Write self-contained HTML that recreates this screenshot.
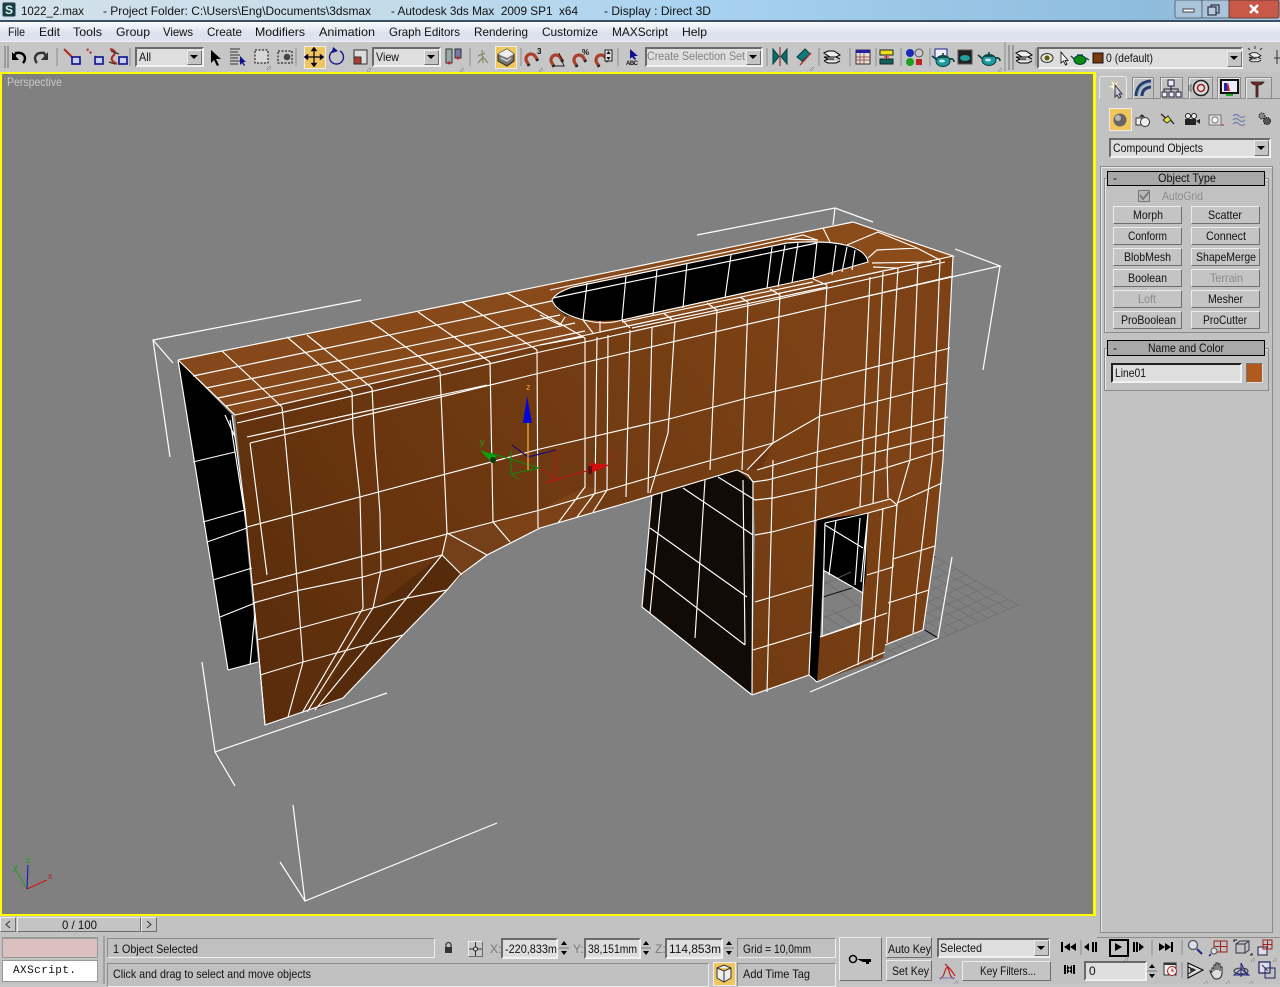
<!DOCTYPE html>
<html><head><meta charset="utf-8"><title>3ds Max</title>
<style>
html,body{margin:0;padding:0;width:1280px;height:984px;overflow:hidden;background:#c6c6c6}
div{position:absolute;box-sizing:border-box}
.b{background:#c4c4c4;border:1px solid;border-color:#ececec #6e6e6e #6e6e6e #ececec}
.s{background:#dedede;border:2px solid;border-color:#6a6a6a #f0f0f0 #f0f0f0 #6a6a6a}
.f{background:#c0c0c0;border:1px solid;border-color:#8a8a8a #eee #eee #8a8a8a}
.g{border:1px solid #8a8a8a;box-shadow:inset 1px 1px 0 #e8e8e8}
svg{position:absolute;left:0;top:0}
text{font-family:"Liberation Sans",sans-serif;font-size:12px;fill:#111}
</style></head><body>

<div style="left:0;top:0;width:1280px;height:21px;background:linear-gradient(90deg,#d4e2ea 0,#c4dcea 30%,#a8d2f0 55%,#9cc8e8 70%,#8ebcdc 90%,#a8c8dc 100%)"></div>
<div style="left:0;top:20px;width:1280px;height:2px;background:#3c5064"></div>
<div style="left:0;top:22px;width:1280px;height:19px;background:linear-gradient(#f8fafc 0,#eef1f8 25%,#dde1ee 60%,#dfe3ef 100%)"></div>
<div style="left:0;top:41px;width:1280px;height:31px;background:#c6c6c6;border-top:1px solid #f0f0f0"></div>
<div style="left:0;top:72px;width:1096px;height:844px;background:#808080;border:2px solid #ffff00;border-right:3px solid #ffff00"></div>
<div style="left:1096px;top:72px;width:184px;height:866px;background:#c2c2c2"></div>
<div style="left:0;top:916px;width:1096px;height:22px;background:#c2c2c2"></div>
<div style="left:0;top:934px;width:1280px;height:50px;background:#c2c2c2"></div>

<!-- toolbar widgets -->
<div style="left:304px;top:46px;width:22px;height:23px;background:#efc75e;border:1px solid #eee"></div>
<div style="left:495px;top:46px;width:22px;height:23px;background:#efc75e;border:1px solid #eee"></div>
<div class="s" style="left:135px;top:47px;width:69px;height:20px"></div>
<div class="b" style="left:187px;top:50px;width:15px;height:15px"></div>
<div class="s" style="left:372px;top:47px;width:69px;height:20px"></div>
<div class="b" style="left:424px;top:50px;width:15px;height:15px"></div>
<div class="s" style="left:645px;top:47px;width:118px;height:20px"></div>
<div class="b" style="left:746px;top:50px;width:15px;height:15px"></div>
<div class="s" style="left:1037px;top:47px;width:206px;height:22px"></div>
<div class="b" style="left:1227px;top:51px;width:15px;height:16px"></div>

<!-- right panel -->
<div style="left:1099px;top:98px;width:181px;height:1px;background:#8e8e8e"></div>
<div style="left:1099px;top:76px;width:28px;height:23px;background:#c2c2c2;border:1px solid #e8e8e8;border-bottom:none;border-radius:3px 3px 0 0"></div>
<div class="g" style="left:1132px;top:77px;width:22px;height:22px;border-bottom:none"></div>
<div class="g" style="left:1160px;top:77px;width:23px;height:22px;border-bottom:none"></div>
<div class="g" style="left:1188px;top:77px;width:25px;height:22px;border-bottom:none"></div>
<div class="g" style="left:1217px;top:77px;width:24px;height:22px;border-bottom:none"></div>
<div class="g" style="left:1245px;top:77px;width:27px;height:22px;border-bottom:none"></div>
<div style="left:1109px;top:108px;width:23px;height:23px;background:#efc75e;border:1px solid #eee"></div>
<div class="s" style="left:1109px;top:138px;width:162px;height:20px"></div>
<div class="b" style="left:1254px;top:140px;width:15px;height:16px"></div>
<div class="g" style="left:1100px;top:166px;width:173px;height:767px;border-bottom:1px solid #8a8a8a"></div>
<div class="g" style="left:1104px;top:178px;width:165px;height:155px"></div>
<div class="g" style="left:1104px;top:348px;width:165px;height:43px"></div>
<div style="left:1107px;top:171px;width:158px;height:15px;background:#a8a8a8;border:1px solid #000"></div>
<div style="left:1107px;top:340px;width:158px;height:16px;background:#a8a8a8;border:1px solid #000"></div>
<div style="left:1138px;top:190px;width:12px;height:12px;background:#b8b8b8;border:1px solid #777"></div>
<div class="b" style="left:1113px;top:206px;width:69px;height:18px"></div><div class="b" style="left:1191px;top:206px;width:69px;height:18px"></div>
<div class="b" style="left:1113px;top:227px;width:69px;height:18px"></div><div class="b" style="left:1191px;top:227px;width:69px;height:18px"></div>
<div class="b" style="left:1113px;top:248px;width:69px;height:18px"></div><div class="b" style="left:1191px;top:248px;width:69px;height:18px"></div>
<div class="b" style="left:1113px;top:269px;width:69px;height:18px"></div><div class="b" style="left:1191px;top:269px;width:69px;height:18px"></div>
<div class="b" style="left:1113px;top:290px;width:69px;height:18px"></div><div class="b" style="left:1191px;top:290px;width:69px;height:18px"></div>
<div class="b" style="left:1113px;top:311px;width:69px;height:18px"></div><div class="b" style="left:1191px;top:311px;width:69px;height:18px"></div>
<div class="s" style="left:1111px;top:363px;width:131px;height:20px;border-color:#222 #f0f0f0 #f0f0f0 #222"></div>
<div style="left:1246px;top:363px;width:17px;height:20px;background:#b15a1e;border:1px solid #ddd;border-left-color:#777;border-top-color:#777"></div>
<div style="left:1097px;top:937px;width:183px;height:1px;background:#8e8e8e"></div>

<!-- bottom widgets -->
<div class="b" style="left:0;top:917px;width:16px;height:15px"></div>
<div class="b" style="left:17px;top:917px;width:124px;height:15px"></div>
<div class="b" style="left:141px;top:917px;width:16px;height:15px"></div>
<div style="left:2px;top:937px;width:96px;height:21px;background:#dcc0c0;border:1px solid #999;border-top:2px solid #999"></div>
<div style="left:2px;top:960px;width:96px;height:22px;background:#fff;border:1px solid #999"></div>
<div style="left:103px;top:936px;width:2px;height:48px;background:#a0a0a0"></div>
<div class="f" style="left:107px;top:938px;width:328px;height:20px"></div>
<div class="f" style="left:107px;top:963px;width:602px;height:24px"></div>
<div class="b" style="left:468px;top:941px;width:15px;height:16px;background:#c8c8c8"></div>
<div class="s" style="left:501px;top:938px;width:57px;height:21px"></div>
<div class="s" style="left:584px;top:938px;width:57px;height:21px"></div>
<div class="s" style="left:665px;top:938px;width:58px;height:21px"></div>
<div class="f" style="left:737px;top:938px;width:99px;height:20px"></div>
<div class="f" style="left:737px;top:963px;width:99px;height:24px"></div>
<div style="left:713px;top:962px;width:23px;height:24px;background:#efc75e;border:1px solid #eee"></div>
<div class="b" style="left:839px;top:937px;width:43px;height:44px"></div>
<div class="b" style="left:886px;top:937px;width:46px;height:21px"></div>
<div class="b" style="left:886px;top:960px;width:46px;height:21px"></div>
<div class="s" style="left:937px;top:938px;width:113px;height:20px"></div>
<div class="b" style="left:1034px;top:940px;width:15px;height:16px"></div>
<div class="b" style="left:962px;top:961px;width:89px;height:20px"></div>
<div class="s" style="left:1084px;top:961px;width:63px;height:20px"></div>
<div style="top:939px;width:20px;height:18px;border:2px solid #000;left:1109px"></div>

<svg width="1280" height="984" viewBox="0 0 1280 984" xmlns="http://www.w3.org/2000/svg">
<defs>
<linearGradient id="fr" gradientUnits="userSpaceOnUse" x1="270" y1="720" x2="800" y2="330">
<stop offset="0" stop-color="#592c0b"/><stop offset=".45" stop-color="#6c3710"/><stop offset="1" stop-color="#7c4215"/></linearGradient>
<linearGradient id="tp" gradientUnits="userSpaceOnUse" x1="180" y1="360" x2="950" y2="260">
<stop offset="0" stop-color="#85481a"/><stop offset="1" stop-color="#8b4c1a"/></linearGradient>
<g id="mag"><g transform="rotate(-30)"><path d="M-5 4 V0 A5 5 0 0 1 5 0 V4" fill="none" stroke="#a8402c" stroke-width="3.200"/><path d="M-6.500 4h3M3.500 4h3" stroke="#222" stroke-width="2"/></g></g>
<g id="pot"><ellipse cx="0" cy="1" rx="7" ry="5.5" fill="#1f9a9e" stroke="#083c3c"/><path d="M-6 0 L-11 -4 M6 -1 q5 -1 5 3" stroke="#083c3c" stroke-width="1.6" fill="none"/><path d="M-5 -3 h10 M-1 -6 h2" stroke="#083c3c" stroke-width="1.5"/><ellipse cx="-1" cy="1" rx="3" ry="1.5" fill="#bdeaea"/></g>
<g id="lay"><path d="M-8 -5 l4 -2 h6 l6 4 -4 2 h-6 z M-8 -1 l12 0 4 2 M-8 -1 l4 2 h6 M-8 3 l4 2 h8 l4 -2 M-8 3 l4 -2" fill="#eee" stroke="#000"/></g>
<g id="tri"><path d="M0 0 l-3 3 h3 z" fill="#fff" stroke="#555" stroke-width=".5"/></g>
<g id="dn"><path d="M-4 -2 h8 l-4 4 z" fill="#000"/></g>
<g id="spn"><path d="M0 -7 l3 4 h-6 z M0 7 l3 -4 h-6 z" fill="#000"/><path d="M-5 0 h10" stroke="#777"/></g>
</defs>

<!-- grid -->
<path d="M1018 605L852 509M1008 609L842 513M998 614L832 518M988 618L822 522M979 622L813 526M969 626L803 530M959 631L793 535M949 635L783 539M939 639L773 543M929 644L763 548M919 648L753 552M910 652L744 556M900 656L734 560M890 661L724 565M880 665L714 569M1018 605L880 665M1008 599L870 659M997 593L859 653M987 587L849 647M976 581L838 641M966 575L828 635M956 569L818 629M945 563L807 623M935 557L797 617" stroke="#707070" stroke-width=".8" fill="none"/>
<path d="M925 630l13 8M935 557l-4 -1" stroke="#000" fill="none"/>

<!-- model faces -->
<polygon points="178,360 228,670 258,662 240,470 232,415" fill="#000"/>
<polygon points="737,470 753,482 752,695 642,607 652,495" fill="#120a05"/>
<polygon points="235,415 540,345 953,256 943,460 935,546 923,630 885,645 883,658 817,682 809,675 752,695 755,535 753,482 737,470 630,502 540,528 487,555 460,575 447,590 403,635 343,698 265,725 255,613 245,510" fill="url(#fr)"/>
<polygon points="178,360 507,293 853,222 953,256 540,345 235,415" fill="url(#tp)"/>
<polygon points="442,555 462,575 447,590 403,635 343,698 315,710 373,608" fill="#552b0b"/>
<polygon points="447,533 493,522 510,542 487,555 462,575 442,555" fill="#74401a"/>
<polygon points="493,522 538,510 585,487 607,490 593,512 540,528 510,542" fill="#7a4216"/>
<polygon points="745,470 773,443 762,468" fill="#693610"/>
<polygon points="817,520 860,507 890,499 897,505 868,513" fill="#8a4c1c"/>
<!-- door -->
<polygon points="817,520 868,513 866,575 863,593 862,623 820,637 817,682 809,675" fill="#000"/>
<polygon points="823,570 863,593 862,623 820,637" fill="#808080"/>
<path d="M851 572l-26 12M863 610l-38 -29M845 629l-22 -14M823 618l36 -14M832 634l-9 -5M855 626l-22 -16" stroke="#6c6c6c" stroke-width=".8" fill="none"/>
<path d="M823 597L855 587" stroke="#111" stroke-width="1"/>
<!-- hole -->
<polygon points="552,300 556,308 565,315 580,319 600,321 622,320 767,288 813,278 868,262 866,255 857,248 845,245 833,243 813,242 787,243 573,287 558,294" fill="#000"/>

<!-- wires -->
<g fill="none" stroke="#fff" stroke-width="1.15">
<path d="M178 360L507 293L853 222L953 256L540 345L235 415L178 360"/>
<path d="M193 376L552 301M206 388L560 315M218 398L575 323M226 406L585 331M222 351L282 407M287 337L352 392M307 335L372 388M370 321L440 372M418 312L490 362M462 302L537 350M507 293L585 338M550 290L787 239L818 240"/>
<path d="M237 423L540 352L945 262M250 443L540 373L953 276M247 437L487 385"/>
<path d="M247 527L540 449L673 418L747 398L823 380L950 348"/>
<path d="M253 585L493 522L540 510L648 478L773 443M948 383L820 416L773 443L747 470M948 417L817 452L757 470M945 435L817 467L767 480L753 482M755 500L773 498L817 488L863 475L943 450"/>
<path d="M755 535L772 532L817 520L860 507L890 499L897 505L868 513L825 523M897 503L942 483M867 575L893 567L893 559L935 546M820 637L887 613M888 603L929 590M755 602L772 597L813 585M753 650L812 632"/>
<path d="M253 603L300 590L363 577L380 572L442 555M257 640L300 628L373 608L407 598L447 590M260 675L303 662L403 635M193 462L235 452M203 522L245 510M207 542L247 528M213 580L252 568M220 617L255 603M255 613L250 665M228 670L258 662"/>
<path d="M178 360L228 670M232 415L245 510L255 613L265 725M230 420L247 528M225 415L235 437M250 443L267 575"/>
<path d="M282 407L285 437L292 513L303 662L288 717M352 392L353 433L360 497L363 608M372 388L375 447L380 513L381 570L373 608M440 372L444 463L447 533L442 555M490 362L493 522L510 542M537 350L538 528"/>
<path d="M585 338L585 487L558 523M597 337L595 493L577 517M608 335L607 490L593 512M630 330L626 497M652 327L648 493M675 322L668 433L650 493M717 310L710 470M748 302L742 470M780 295L773 443M827 285L817 460M870 277L862 460L860 507M883 272L875 460L873 503M898 268L887 460L888 498M918 263L910 460L897 505M940 260L932 460L928 493L917 587L913 633M953 256L943 460L935 547L923 630"/>
<path d="M447 533L487 555M442 555L462 575M363 608L302 713M373 608L307 712M442 555L315 710"/>
<path d="M447 590L403 635L343 698L265 725L255 613M487 555L460 575L447 590M540 528L487 555M630 502L540 528M737 470L630 502"/>
<path d="M552 300Q556 312 580 319T622 320L767 288L813 278L868 262Q866 250 845 245Q825 240 787 243L573 287Q556 292 552 300M553 298L817 243"/>
<path d="M587 283L583 320M626 276L622 320M657 269L653 315M687 263L683 308M731 255L725 298M772 247L767 288M785 245L778 287M798 243L792 283M817 242L813 279M836 245L832 275M847 247L842 272M855 250L852 270"/>
<path d="M868 258L877 250L917 248L940 260M872 263L932 262M873 267L897 268M847 245L878 232L917 248M830 242L823 228M817 240L803 235L787 239M540 315L560 325M565 317L560 325M540 345L583 337M583 320L593 333M600 321L600 332M622 320L630 328M663 313L673 320M707 303L717 310M740 297L748 302M770 289L780 295M813 279L827 285M622 322L813 282M632 328L827 287M600 332L887 270"/>
<path d="M652 495L642 607L752 695M662 493L650 613M705 480L695 638M753 482L752 695M743 480L745 645M683 488L753 535M650 528L747 597M645 568L745 645M718 477L755 500M737 470L748 475L753 482"/>
<path d="M773 460L767 692M817 460L813 585L809 675M809 675L817 682L885 652M752 695L809 675"/>
<path d="M825 525L863 548M825 523L822 637M836 520L829 575M868 513L861 582M860 518L855 585M823 570L863 593M820 637L862 623M868 513L858 665M883 508L872 660M897 505L887 643M885 645L923 630"/>
</g>

<!-- bounding brackets -->
<g fill="none" stroke="#fff" stroke-width="1.2">
<path d="M361 300L153 340L170 457M153 340L173 363"/>
<path d="M697 235L835 208L873 222M835 208L833 225"/>
<path d="M855 299L1000 266L955 249M1000 266L983 370"/>
<path d="M202 662L215 752L387 693M215 752L235 786"/>
<path d="M497 823L305 901L293 805M305 901L280 862"/>
<path d="M810 692L938 638L952 557"/>
</g>

<!-- gizmo -->
<g>
<path d="M511 451V474M511 474L518 479M511 474L539 468L490 453" stroke="#0c8c0c" fill="none"/>
<path d="M512 445L528 457L556 450" stroke="#20106c" fill="none" stroke-width="1.4"/>
<path d="M556 450V480L540 468M545 483L590 470" stroke="#c01010" fill="none"/>
<path d="M528 423V470" stroke="#e8b030" stroke-width="1.3"/>
<path d="M527 396L523 423H532Z" fill="#0505d8"/>
<path d="M480 450L497 456L492 463Z" fill="#0ca00c"/><circle cx="493" cy="460" r="3" fill="#063c06"/>
<path d="M610 465L590 463L591 473Z" fill="#d01010"/><rect x="588" y="466" width="4" height="8" fill="#601010"/>
<text x="526" y="390" style="font-size:9px;fill:#e8a030">z</text>
<text x="480" y="445" style="font-size:9px;fill:#20a020">y</text>
<text x="611" y="459" style="font-size:9px;fill:#b02020">x</text>
<path d="M27 889L47 880" stroke="#d01010"/><path d="M27 889L16 870" stroke="#20a020"/><path d="M27 889L28 865" stroke="#1010d0"/>
<text x="26" y="863" style="font-size:9px;fill:#20a020">z</text><text x="48" y="879" style="font-size:9px;fill:#b02020">x</text><text x="13" y="870" style="font-size:9px;fill:#20a020">y</text>
</g>

<!-- title -->
<rect x="2" y="2" width="14" height="15" rx="2" fill="#1c3c44" stroke="#cde"/><text x="5" y="14" style="font-size:12px;font-weight:bold;fill:#cfe">S</text>
<text x="21" y="15" textLength="63" lengthAdjust="spacingAndGlyphs">1022_2.max</text>
<text x="103" y="15" textLength="268" lengthAdjust="spacingAndGlyphs">- Project Folder: C:\Users\Eng\Documents\3dsmax</text>
<text x="391" y="15" textLength="187" lengthAdjust="spacingAndGlyphs" xml:space="preserve">- Autodesk 3ds Max  2009 SP1  x64</text>
<text x="604" y="15" textLength="107" lengthAdjust="spacingAndGlyphs">- Display : Direct 3D</text>
<rect x="1175" y="0" width="27" height="18" rx="2" fill="#a9c4d8" stroke="#5a6c7c"/>
<rect x="1202" y="0" width="27" height="18" fill="#a9c4d8" stroke="#5a6c7c"/>
<rect x="1229" y="0" width="50" height="18" rx="2" fill="#c85848" stroke="#6c3c34"/>
<rect x="1183" y="9" width="11" height="3" fill="#fff" stroke="#445"/>
<rect x="1211" y="5" width="8" height="8" fill="none" stroke="#334" stroke-width="1.2"/><rect x="1208" y="7" width="8" height="8" fill="#b8ccdc" stroke="#334" stroke-width="1.2"/>
<path d="M1250 5l8 8M1258 5l-8 8" stroke="#fff" stroke-width="2.6"/>

<!-- menu -->
<g>
<text x="8" y="36" textLength="17" lengthAdjust="spacingAndGlyphs">File</text><text x="39" y="36" textLength="21" lengthAdjust="spacingAndGlyphs">Edit</text><text x="73" y="36" textLength="29" lengthAdjust="spacingAndGlyphs">Tools</text>
<text x="116" y="36" textLength="34" lengthAdjust="spacingAndGlyphs">Group</text><text x="163" y="36" textLength="30" lengthAdjust="spacingAndGlyphs">Views</text><text x="207" y="36" textLength="35" lengthAdjust="spacingAndGlyphs">Create</text>
<text x="255" y="36" textLength="50" lengthAdjust="spacingAndGlyphs">Modifiers</text><text x="319" y="36" textLength="56" lengthAdjust="spacingAndGlyphs">Animation</text><text x="389" y="36" textLength="71" lengthAdjust="spacingAndGlyphs">Graph Editors</text>
<text x="474" y="36" textLength="54" lengthAdjust="spacingAndGlyphs">Rendering</text><text x="542" y="36" textLength="56" lengthAdjust="spacingAndGlyphs">Customize</text><text x="612" y="36" textLength="56" lengthAdjust="spacingAndGlyphs">MAXScript</text><text x="682" y="36" textLength="25" lengthAdjust="spacingAndGlyphs">Help</text>
</g>

<!-- toolbar icons -->
<g>
<path d="M5 46V68M8 46V68M1009 45V70M1013 45V70" stroke="#888" stroke-width="1.4"/>
<path d="M57 48V66M130 48V66M296 48V66M470 48V66M521 48V66M618 48V66M767 48V66M819 48V66M850 48V66M876 48V66M901 48V66M930 48V66M1005 42V71M1036 48V66" stroke="#8c8c8c"/>
<path d="M13 58 L16 53 Q24 52 25 58 Q25 61 23 63" fill="none" stroke="#000" stroke-width="2.4"/><path d="M12 52v8h7z" fill="#000"/>
<path d="M47 58 L44 53 Q36 52 35 58 Q35 61 37 63" fill="none" stroke="#333" stroke-width="2.4"/><path d="M48 52v8h-7z" fill="#333"/>
<g stroke="#b03028" stroke-width="2.200" fill="none"><path d="M64 49l9 9"/><path d="M87 49l5 5M95 56l2 3" stroke-dasharray="2 2"/><path d="M110 49q8 2 3 7q-4 4 4 8"/></g>
<g fill="#c8d0f0" stroke="#10108c" stroke-width="1.600"><rect x="72" y="57" width="8" height="7"/><rect x="95" y="57" width="8" height="7"/><rect x="119" y="57" width="8" height="7"/></g>
<path d="M111 51l8 3M109 62l6 2" stroke="#333" stroke-width="1.4"/>
<path d="M211 50V63L214 60L217 66L219 65L216 59H221Z" fill="#000"/>
<path d="M230 49h10M230 52h8M230 55h10M230 58h8M230 61h10M230 64h8" stroke="#333"/><path d="M240 56v9l2-2 2 3 1-1-2-3h3z" fill="#10108c"/>
<rect x="255" y="50" width="13" height="13" fill="#d8d8d8" stroke="#000" stroke-dasharray="2 1.5"/>
<rect x="278" y="51" width="14" height="12" fill="none" stroke="#000" stroke-dasharray="2 1.5"/><circle cx="287" cy="57" r="3.3" fill="#444"/>
<use href="#tri" x="270" y="66"/>
<path d="M314 48V66M305 57H323" stroke="#000" stroke-width="1.2"/><path d="M314 47l-3 4h6zM314 67l-3-4h6zM304 57l4-3v6zM324 57l-4-3v6z" fill="#000" stroke="#10108c" stroke-width=".5"/>
<path d="M333 51a7 7 0 1 0 7 0" fill="none" stroke="#10108c" stroke-width="1.3"/><path d="M333 47l5 4-6 2z" fill="#10108c"/>
<rect x="354" y="50" width="13" height="14" fill="#ddd" stroke="#333"/><rect x="354" y="57" width="7" height="7" fill="#b03c30" stroke="#333"/>
<use href="#tri" x="370" y="68"/>
<rect x="446" y="49" width="6" height="14" fill="#9aa" stroke="#333"/><rect x="455" y="49" width="6" height="9" fill="#77a" stroke="#333"/><circle cx="449" cy="63" r="1.5" fill="#c02020"/><circle cx="458" cy="58" r="1.5" fill="#c02020"/><use href="#tri" x="463" y="68"/>
<path d="M478 56l7-3M482 50l1 13M478 63l5-6 5 6" stroke="#8a8a6c" stroke-width="1.3" fill="none"/>
<path d="M498 54l9-5 7 5v7l-7 5-9-5z" fill="#777" stroke="#222"/><path d="M498 54l9-5 7 5-7 4z" fill="#eee"/><path d="M501 58l6 3 4-3" stroke="#eee" fill="none"/>
<use href="#mag" x="531" y="59"/><text x="537" y="54" style="font-size:8px;font-weight:bold">3</text><use href="#tri" x="542" y="68"/>
<use href="#mag" x="556" y="60"/><path d="M552 66h12l-5-13" fill="none" stroke="#222"/>
<use href="#mag" x="579" y="60"/><text x="582" y="55" style="font-size:8px;font-weight:bold">%</text>
<use href="#mag" x="601" y="60"/><rect x="605" y="50" width="7" height="11" fill="#ddd" stroke="#222"/><path d="M608.500 51l-2 3h4zM608.500 60l-2-3h4z" fill="#000"/>
<path d="M630 49v10l2-2 3 3 1-1-2-3h4z" fill="#10108c"/><text x="626" y="65" style="font-size:6px;font-weight:bold" textLength="12">ABC</text>
<path d="M773 49v15l6-7.500zM787 49v15l-6-7.500z" fill="#0c6c6c" stroke="#043c3c"/><path d="M780 47V66" stroke="#a03030" stroke-width="1.2"/>
<path d="M797 57l8-8 5 5-8 7zM802 62l9-9" fill="#0c7c7c" stroke="#043c3c"/><path d="M800 65l11-12" stroke="#b03030" stroke-width="1.3"/><use href="#tri" x="813" y="67"/>
<use href="#lay" x="832" y="58"/>
<rect x="856" y="50" width="14" height="14" fill="#e8e0d8" stroke="#333"/><rect x="856" y="50" width="14" height="3" fill="#2020a0"/><path d="M860 53v11M864 53v11M856 57h14M856 60h14" stroke="#803030" stroke-width=".7"/>
<rect x="880" y="50" width="13" height="5" fill="#ece020" stroke="#222"/><rect x="880" y="59" width="13" height="5" fill="#106060" stroke="#222"/><path d="M886.500 55v4M884 57h5" stroke="#c02020"/>
<circle cx="910" cy="53" r="4" fill="#1828b8"/><circle cx="919" cy="53" r="4" fill="#c8c8c8" stroke="#555"/><circle cx="910" cy="62" r="4" fill="#20a020"/><rect x="916" y="59" width="6" height="6" fill="#c02020"/>
<rect x="935" y="49" width="12" height="9" fill="#eef" stroke="#20208c"/><use href="#pot" x="943" y="60"/>
<rect x="958" y="50" width="14" height="14" fill="#222" stroke="#555"/><ellipse cx="965" cy="58" rx="5" ry="3" fill="#20a0a0"/>
<use href="#pot" x="989" y="59"/><use href="#tri" x="1001" y="68"/>
<use href="#lay" x="1024" y="58"/>
<ellipse cx="1047" cy="58" rx="6" ry="4.500" fill="#e8e8c8" stroke="#333"/><circle cx="1047" cy="58" r="2.500" fill="#5c5c20"/>
<path d="M1061 52v11l2.500-2 2 4 1.500-1-2-3.500h3z" fill="#fff" stroke="#000" stroke-width=".8"/>
<ellipse cx="1080" cy="60" rx="6" ry="4.500" fill="#0e8a10" stroke="#044"/><path d="M1074 59l-3-3M1086 58l3 2M1077 55h6" stroke="#044" stroke-width="1.300"/>
<rect x="1093" y="53" width="10" height="10" fill="#7a3a10" stroke="#111"/>
<use href="#dn" x="194" y="57"/><use href="#dn" x="431" y="57"/><use href="#dn" x="753" y="57"/><use href="#dn" x="1234" y="58"/>
<g transform="translate(1255 58) scale(.75)"><use href="#lay"/></g><path d="M1250 50l-2-2M1255 49v-3M1260 50l2-2" stroke="#333"/><path d="M1274 58h6M1277 50v14" stroke="#333"/>
</g>
<text x="139" y="61" textLength="12" lengthAdjust="spacingAndGlyphs">All</text><text x="376" y="61" textLength="23" lengthAdjust="spacingAndGlyphs">View</text>
<text x="647" y="60" textLength="98" lengthAdjust="spacingAndGlyphs" style="fill:#808080">Create Selection Set</text>
<text x="1106" y="62" textLength="47" lengthAdjust="spacingAndGlyphs">0 (default)</text>
<text x="7" y="86" textLength="55" lengthAdjust="spacingAndGlyphs" style="fill:#c8c8c8">Perspective</text>

<!-- panel icons -->
<g>
<path d="M1111 80l4 4 3-3 -2 5 4 1-5 1-1 4-1-4-4-1 4-2z" fill="#fff" stroke="#e8d890" stroke-width=".6"/><path d="M1115 85l7 9 -3 0 2 3-2 1-2-3-2 2z" fill="#ccd" stroke="#334"/>
<path d="M1136 96q1-14 15-15M1142 96q0-8 9-9" fill="none" stroke="#223c6c" stroke-width="3"/><path d="M1138 95q1-11 13-12" fill="none" stroke="#90a8c8" stroke-width="1.500"/>
<rect x="1168" y="80" width="6" height="6" fill="#eef" stroke="#223"/><rect x="1162" y="92" width="5" height="5" fill="#eef" stroke="#223"/><rect x="1169" y="92" width="5" height="5" fill="#eef" stroke="#223"/><rect x="1176" y="92" width="5" height="5" fill="#eef" stroke="#223"/><path d="M1171 86v3M1164 92v-3h14v3M1171 89v3" fill="none" stroke="#223"/>
<circle cx="1201" cy="88" r="7.500" fill="#ddd" stroke="#222" stroke-width="1.500"/><circle cx="1201" cy="88" r="3.500" fill="none" stroke="#a02020" stroke-width="1.500"/><path d="M1191 84v8M1189 85v6" stroke="#666"/>
<rect x="1221" y="80" width="17" height="13" fill="#eef" stroke="#111" stroke-width="2"/><path d="M1225 91l3-9 2 9z" fill="#c02020"/><path d="M1224 83h3v8h-3z" fill="#1828b8"/><rect x="1226" y="94" width="7" height="2" fill="#2a2"/>
<path d="M1251 82h13q-2 3-6 3v12h-2V85q-3 0-5-3z" fill="#7a2818" stroke="#222" stroke-width=".8"/>
<circle cx="1120" cy="120" r="6.500" fill="#666"/><circle cx="1118" cy="118" r="3" fill="#ccc" opacity=".8"/>
<rect x="1136" y="118" width="8" height="7" fill="#eee" stroke="#333"/><circle cx="1145" cy="122" r="4.500" fill="#eee" stroke="#333"/><path d="M1142 114l3 3h-6z" fill="#333"/>
<path d="M1161 114l7 6M1169 118l5 6" stroke="#222" stroke-width="1.300"/><path d="M1163 120l5-4 3 4-4 3z" fill="#e8e040" stroke="#333"/>
<rect x="1185" y="119" width="11" height="6" fill="#222"/><circle cx="1188" cy="116" r="2.500" fill="#eee" stroke="#222"/><circle cx="1194" cy="116" r="2.500" fill="#eee" stroke="#222"/><path d="M1196 121l4-2v5z" fill="#222"/>
<rect x="1209" y="115" width="12" height="10" fill="#ddd" stroke="#777"/><circle cx="1215" cy="120" r="3" fill="#fff" stroke="#777"/><path d="M1221 125h3" stroke="#a03030"/>
<path d="M1233 116q3-3 6 0t6 0M1233 120q3-3 6 0t6 0M1233 124q3-3 6 0t6 0" fill="none" stroke="#6c7cb0" stroke-width="1.100"/>
<circle cx="1262" cy="116" r="3" fill="#888" stroke="#222" stroke-dasharray="1.500 1"/><circle cx="1267" cy="121" r="3.500" fill="#555" stroke="#111" stroke-dasharray="1.500 1"/>
<use href="#dn" x="1261" y="148"/>
<path d="M1140 195l3 4 6-7" stroke="#777" stroke-width="1.800" fill="none"/>
</g>
<text x="1113" y="152" textLength="90" lengthAdjust="spacingAndGlyphs">Compound Objects</text>
<text x="1113" y="182">-</text><text x="1158" y="182" textLength="58" lengthAdjust="spacingAndGlyphs">Object Type</text>
<text x="1162" y="200" textLength="41" lengthAdjust="spacingAndGlyphs" style="fill:#8c8c8c">AutoGrid</text>
<text x="1133" y="219" textLength="30" lengthAdjust="spacingAndGlyphs">Morph</text><text x="1208" y="219" textLength="34" lengthAdjust="spacingAndGlyphs">Scatter</text>
<text x="1128" y="240" textLength="39" lengthAdjust="spacingAndGlyphs">Conform</text><text x="1206" y="240" textLength="40" lengthAdjust="spacingAndGlyphs">Connect</text>
<text x="1124" y="261" textLength="47" lengthAdjust="spacingAndGlyphs">BlobMesh</text><text x="1196" y="261" textLength="60" lengthAdjust="spacingAndGlyphs">ShapeMerge</text>
<text x="1128" y="282" textLength="39" lengthAdjust="spacingAndGlyphs">Boolean</text><text x="1210" y="282" textLength="33" lengthAdjust="spacingAndGlyphs" style="fill:#8c8c8c">Terrain</text>
<text x="1138" y="303" textLength="18" lengthAdjust="spacingAndGlyphs" style="fill:#8c8c8c">Loft</text><text x="1208" y="303" textLength="35" lengthAdjust="spacingAndGlyphs">Mesher</text>
<text x="1121" y="324" textLength="55" lengthAdjust="spacingAndGlyphs">ProBoolean</text><text x="1203" y="324" textLength="44" lengthAdjust="spacingAndGlyphs">ProCutter</text>
<text x="1113" y="352">-</text><text x="1148" y="352" textLength="76" lengthAdjust="spacingAndGlyphs">Name and Color</text>
<text x="1115" y="377" textLength="31" lengthAdjust="spacingAndGlyphs">Line01</text>

<!-- bottom text -->
<path d="M10 921l-4 3.500 4 3.500M147 921l4 3.500-4 3.500" fill="none" stroke="#333"/>
<text x="62" y="929" textLength="35" lengthAdjust="spacingAndGlyphs">0 / 100</text>
<text x="13" y="973" textLength="63" style="font-family:'Liberation Mono',monospace;font-size:11px">AXScript.</text>
<text x="113" y="953" textLength="85" lengthAdjust="spacingAndGlyphs">1 Object Selected</text>
<text x="113" y="978" textLength="198" lengthAdjust="spacingAndGlyphs">Click and drag to select and move objects</text>
<rect x="445" y="947" width="7" height="6" fill="#333"/><path d="M446 947v-2a2.500 2.500 0 0 1 5 0v2" fill="none" stroke="#333" stroke-width="1.200"/>
<path d="M475.500 942v14M469 949h13" stroke="#333"/><circle cx="475.500" cy="949" r="2" fill="#ddd" stroke="#222"/>
<text x="490" y="953" style="fill:#777">X:</text><text x="505" y="953" textLength="52" lengthAdjust="spacingAndGlyphs">-220,833m</text>
<text x="573" y="953" style="fill:#777">Y:</text><text x="588" y="953" textLength="49" lengthAdjust="spacingAndGlyphs">38,151mm</text>
<text x="655" y="953" style="fill:#777">Z:</text><text x="669" y="953" textLength="52" lengthAdjust="spacingAndGlyphs">114,853m</text>
<use href="#spn" x="564" y="948"/><use href="#spn" x="646" y="948"/><use href="#spn" x="729" y="948"/><use href="#spn" x="1152" y="971"/>
<text x="743" y="953" textLength="68" lengthAdjust="spacingAndGlyphs">Grid = 10,0mm</text><text x="743" y="978" textLength="67" lengthAdjust="spacingAndGlyphs">Add Time Tag</text>
<path d="M717 968l7-3 7 3v10l-7 4-7-4zM717 968l7 3 7-3M724 971v11" fill="#eee" stroke="#333"/>
<circle cx="853" cy="959" r="3.500" fill="none" stroke="#000" stroke-width="1.500"/><path d="M857 959h14v3h-2v2h-3v-2h-3" fill="#000"/>
<text x="888" y="953" textLength="43" lengthAdjust="spacingAndGlyphs">Auto Key</text><text x="892" y="975" textLength="37" lengthAdjust="spacingAndGlyphs">Set Key</text>
<text x="940" y="952" textLength="42" lengthAdjust="spacingAndGlyphs">Selected</text><text x="980" y="975" textLength="56" lengthAdjust="spacingAndGlyphs">Key Filters...</text>
<text x="1089" y="975">0</text>
<use href="#dn" x="1041" y="948"/>
<path d="M940 979q3-1 5-8t4 0q1 6 5 8M945 964q6 5 10 12" fill="none" stroke="#c02020" stroke-width="1.200"/><rect x="939" y="977" width="16" height="2" fill="#8080c0" opacity=".6"/>
<use href="#tri" x="957" y="981"/>
<g fill="#000">
<path d="M1061 942h2v10h-2zM1070 943v8l-6-4zM1076 943v8l-6-4z"/>
<path d="M1089 943v8l-5-4zM1092 942h2v10h-2zM1095 942h2v10h-2z"/>
<path d="M1115 943l7 4-7 4z"/>
<path d="M1133 942h2v10h-2zM1136 942h2v10h-2zM1139 943l5 4-5 4z"/>
<path d="M1159 943l6 4-6 4zM1165 943l6 4-6 4zM1171 942h2v10h-2z"/>
<path d="M1064 965h2v9h-2zM1073 965h2v9h-2zM1067 965l4 4.500-4 4.500zM1072 965l-4 4.500 4 4.500z"/>
</g>
<path d="M1081 940V955M1152 940V955M1182 940V955M1182 962V978" stroke="#8c8c8c"/>
<use href="#tri" x="1127" y="958"/>
<circle cx="1193" cy="945" r="4.500" fill="#dde" stroke="#555" stroke-width="1.300"/><path d="M1197 949l5 5" stroke="#20208c" stroke-width="2"/>
<rect x="1214" y="941" width="13" height="11" fill="none" stroke="#a02020"/><path d="M1220.500 941v11M1214 946.500h13" stroke="#a02020"/><circle cx="1214" cy="951" r="3" fill="#ddd" stroke="#555"/><path d="M1211 954l-2 2" stroke="#20208c" stroke-width="1.500"/>
<rect x="1236" y="944" width="9" height="9" fill="none" stroke="#334"/><path d="M1236 944l4-3h9v9l-4 3M1245 944l4-3" fill="none" stroke="#334"/><path d="M1234 942v-2h3M1250 955h2v-2" stroke="#111" fill="none"/><use href="#tri" x="1254" y="958"/>
<rect x="1258" y="947" width="9" height="8" fill="#dde" stroke="#223"/><rect x="1263" y="940" width="9" height="9" fill="none" stroke="#a02020"/><path d="M1267.500 940v9M1263 944.500h9" stroke="#a02020"/><use href="#tri" x="1276" y="958"/>
<rect x="1164" y="963" width="12" height="12" fill="#eee" stroke="#333"/><rect x="1164" y="963" width="12" height="2" fill="#333"/><circle cx="1172" cy="971" r="4.500" fill="#eee" stroke="#b02020"/><path d="M1172 968.500v2.500h2" stroke="#b02020" fill="none"/>
<path d="M1188 963l15 7-15 8zM1188 967l7 3-7 4" fill="#ddd" stroke="#000"/><circle cx="1192" cy="970" r="2" fill="#333"/><use href="#tri" x="1207" y="981"/>
<path d="M1212 972v-4h2v3-6h2v5-7h2v7-6h2v7-4h2v7q-1 5-5 5h-2q-3-2-5-8z" fill="#ddd" stroke="#222"/><use href="#tri" x="1229" y="981"/>
<path d="M1241 963v14M1234 975l7-6 8 6zM1241 963l6 12" fill="none" stroke="#20208c"/><ellipse cx="1241" cy="971" rx="7" ry="3" fill="none" stroke="#333"/><use href="#tri" x="1252" y="981"/>
<rect x="1259" y="962" width="11" height="11" fill="#dde" stroke="#202060" stroke-width="1.200"/><rect x="1265" y="968" width="10" height="10" fill="none" stroke="#202060"/><path d="M1262 965l6 6" stroke="#333"/>
</svg>
</body></html>
